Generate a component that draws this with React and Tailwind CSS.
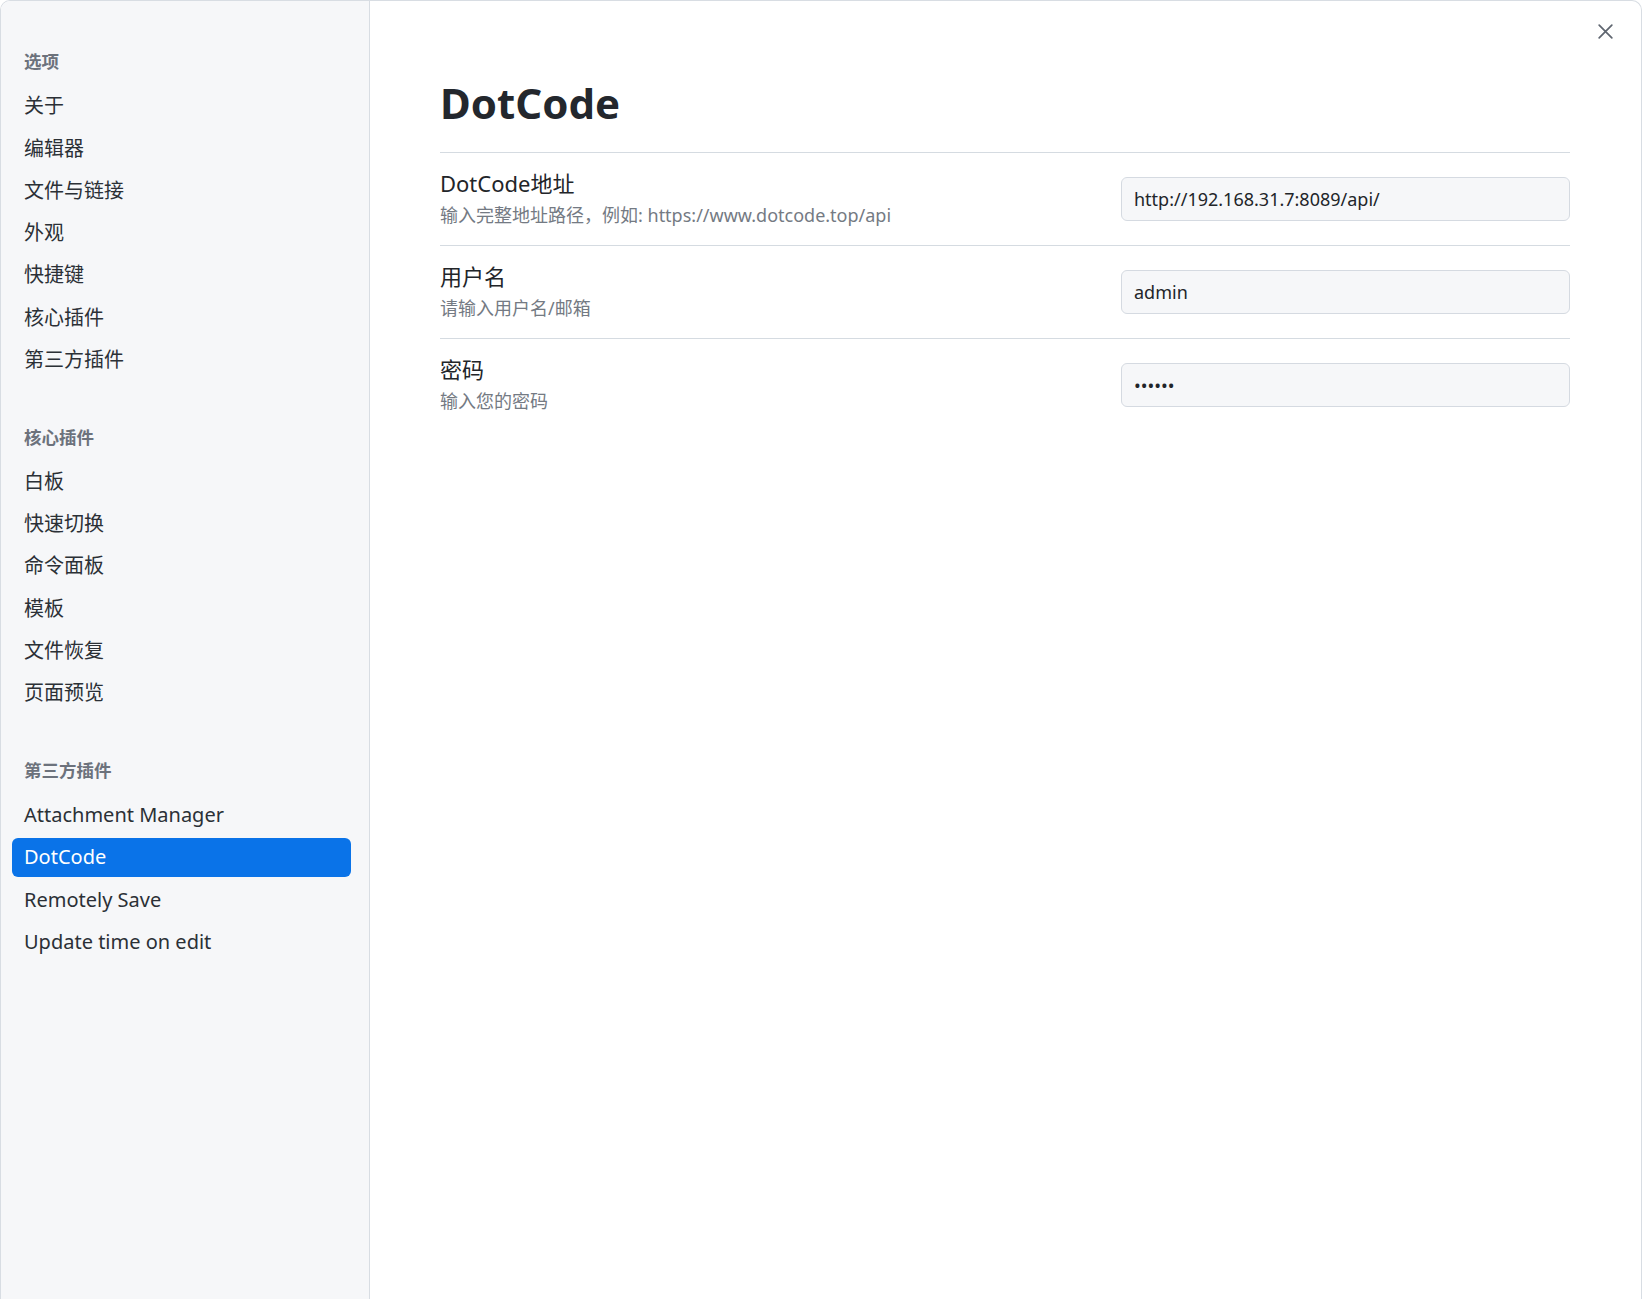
import React from 'react';

const font = { fontFamily: '"Noto Sans", "Noto Sans CJK SC", sans-serif' };

const groups = [
  { title: '选项', items: ['关于', '编辑器', '文件与链接', '外观', '快捷键', '核心插件', '第三方插件'] },
  { title: '核心插件', items: ['白板', '快速切换', '命令面板', '模板', '文件恢复', '页面预览'] },
  { title: '第三方插件', items: ['Attachment Manager', 'DotCode', 'Remotely Save', 'Update time on edit'] },
];

const settings = [
  { name: 'DotCode地址', desc: '输入完整地址路径，例如: https://www.dotcode.top/api', value: 'http://192.168.31.7:8089/api/' },
  { name: '用户名', desc: '请输入用户名/邮箱', value: 'admin' },
  { name: '密码', desc: '输入您的密码', value: 'secret', password: true },
];

function Sidebar() {
  return (
    <nav className="w-[369px] shrink-0 bg-[#f6f7f9] border-r border-[#d8dde3] pt-[41px] pl-[11px] pr-[18px] flex flex-col gap-[38px]">
      {groups.map((g) => (
        <div key={g.title} className="flex flex-col gap-[3.3px]">
          <div className="h-[39px] mb-[2.5px] flex items-center px-[12px] text-[17.5px] font-semibold text-[#6c727c]">{g.title}</div>
          {g.items.map((item) => {
            const active = item === 'DotCode';
            return (
              <div
                key={item}
                className={
                  active
                    ? 'h-[39px] flex items-center px-[12px] rounded-[6px] bg-[#0a73e8] text-white text-[20px]'
                    : 'h-[39px] flex items-center px-[12px] text-[#2b3036] text-[20px]'
                }
              >
                {item}
              </div>
            );
          })}
        </div>
      ))}
    </nav>
  );
}

function SettingRow({ s, last }) {
  return (
    <div className={last ? 'h-[92px] flex items-center justify-between' : 'h-[93px] flex items-center justify-between border-b border-[#d5dbe1]'}>
      <div className="flex flex-col">
        <div className="text-[22px] leading-[32px] text-[#222529]">{s.name}</div>
        <div className="text-[18px] leading-[32px] text-[#747a83]">{s.desc}</div>
      </div>
      <input
        type={s.password ? 'password' : 'text'}
        defaultValue={s.value}
        className="w-[449px] h-[44px] px-[12px] rounded-[6px] border border-[#d5dae1] bg-[#f6f7f9] text-[18px] text-[#222529] outline-none"
        style={font}
      />
    </div>
  );
}

export default function App() {
  return (
    <div className="h-[1299px] w-full bg-white overflow-hidden" style={font}>
      <div className="h-full flex rounded-t-[10px] border-t border-x border-[#d8dde3] overflow-hidden bg-white">
        <Sidebar />
        <main className="relative flex-1 pl-[70px] pr-[71px] pt-[76px]">
          <button className="absolute right-[26px] top-[21px] text-[#5f6670]">
            <svg width="19" height="19" viewBox="0 0 24 24" fill="none" stroke="currentColor" strokeWidth="2.2" strokeLinecap="round">
              <path d="M4 4 L20 20 M20 4 L4 20" />
            </svg>
          </button>
          <h1 className="text-[42px] leading-[52px] font-bold text-[#23272d] pb-[23px] border-b border-[#d5dbe1]">DotCode</h1>
          {settings.map((s, i) => (
            <SettingRow key={s.name} s={s} last={i === settings.length - 1} />
          ))}
        </main>
      </div>
    </div>
  );
}
